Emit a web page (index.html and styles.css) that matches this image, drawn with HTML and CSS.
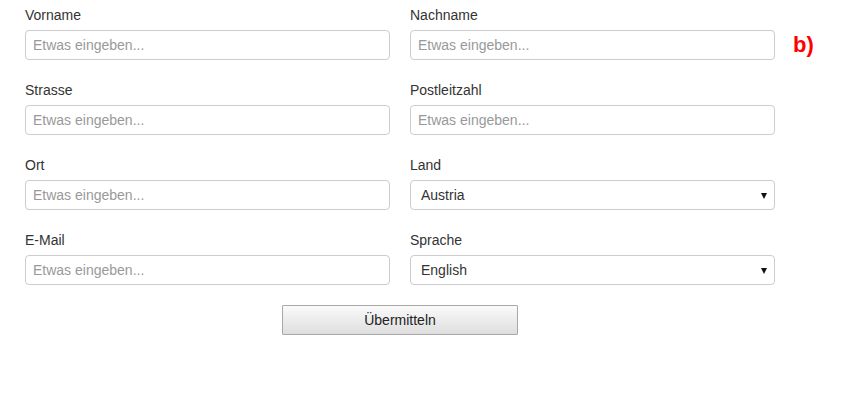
FILE: index.html
```html
<!DOCTYPE html>
<html lang="de">
<head>
<meta charset="utf-8">
<title>Formular</title>
<link rel="stylesheet" href="styles.css">
</head>
<body>
<div class="page">
  <form class="form">
    <div class="grid">
      <div class="field">
        <label class="label">Vorname</label>
        <input class="control" type="text" placeholder="Etwas eingeben...">
      </div>
      <div class="field">
        <label class="label">Nachname</label>
        <input class="control" type="text" placeholder="Etwas eingeben...">
      </div>
      <div class="field">
        <label class="label">Strasse</label>
        <input class="control" type="text" placeholder="Etwas eingeben...">
      </div>
      <div class="field">
        <label class="label">Postleitzahl</label>
        <input class="control" type="text" placeholder="Etwas eingeben...">
      </div>
      <div class="field">
        <label class="label">Ort</label>
        <input class="control" type="text" placeholder="Etwas eingeben...">
      </div>
      <div class="field">
        <label class="label">Land</label>
        <div class="select">
          <span class="select-value">Austria</span>
          <span class="select-arrow"></span>
        </div>
      </div>
      <div class="field">
        <label class="label">E-Mail</label>
        <input class="control" type="text" placeholder="Etwas eingeben...">
      </div>
      <div class="field">
        <label class="label">Sprache</label>
        <div class="select">
          <span class="select-value">English</span>
          <span class="select-arrow"></span>
        </div>
      </div>
    </div>
    <div class="actions">
      <button class="submit" type="button">Übermitteln</button>
    </div>
  </form>
  <div class="tag">b)</div>
</div>
</body>
</html>
```

FILE: styles.css
```css
* { box-sizing: border-box; }

html, body {
  margin: 0;
  padding: 0;
  background: #ffffff;
}

body {
  font-family: "Liberation Sans", Arial, sans-serif;
  font-size: 14px;
  color: #333333;
}

.page {
  display: flex;
  align-items: flex-start;
  padding: 5px 0 0 25px;
}

.form {
  width: 750px;
}

.grid {
  display: grid;
  grid-template-columns: 365px 365px;
  column-gap: 20px;
  row-gap: 20px;
}

.field {
  display: flex;
  flex-direction: column;
}

.label {
  display: block;
  height: 20px;
  line-height: 20px;
  margin-bottom: 5px;
  color: #333333;
  font-size: 14px;
}

.control {
  height: 30px;
  width: 100%;
  border: 1px solid #cccccc;
  border-radius: 4px;
  padding: 0 7px;
  font-family: "Liberation Sans", Arial, sans-serif;
  font-size: 14px;
  color: #333333;
  background: #ffffff;
  outline: none;
}

.control::placeholder {
  color: #999999;
  opacity: 1;
}

.select {
  height: 30px;
  border: 1px solid #cccccc;
  border-radius: 4px;
  display: flex;
  align-items: center;
  justify-content: space-between;
  padding: 0 7px 0 10px;
  background: #ffffff;
  color: #333333;
}

.select-arrow {
  width: 0;
  height: 0;
  border-left: 3.5px solid transparent;
  border-right: 3.5px solid transparent;
  border-top: 6px solid #111111;
  margin-top: 1px;
}

.actions {
  display: flex;
  justify-content: center;
  margin-top: 20px;
}

.submit {
  width: 236px;
  height: 30px;
  border: 1px solid #a8a8a8;
  border-radius: 1px;
  background: linear-gradient(#fafafa, #dedede);
  font-family: "Liberation Sans", Arial, sans-serif;
  font-size: 14px;
  color: #222222;
  padding: 0;
}

.tag {
  margin-left: 18px;
  margin-top: 27px;
  font-size: 22px;
  font-weight: bold;
  color: #ff0000;
  line-height: 26px;
}
```
